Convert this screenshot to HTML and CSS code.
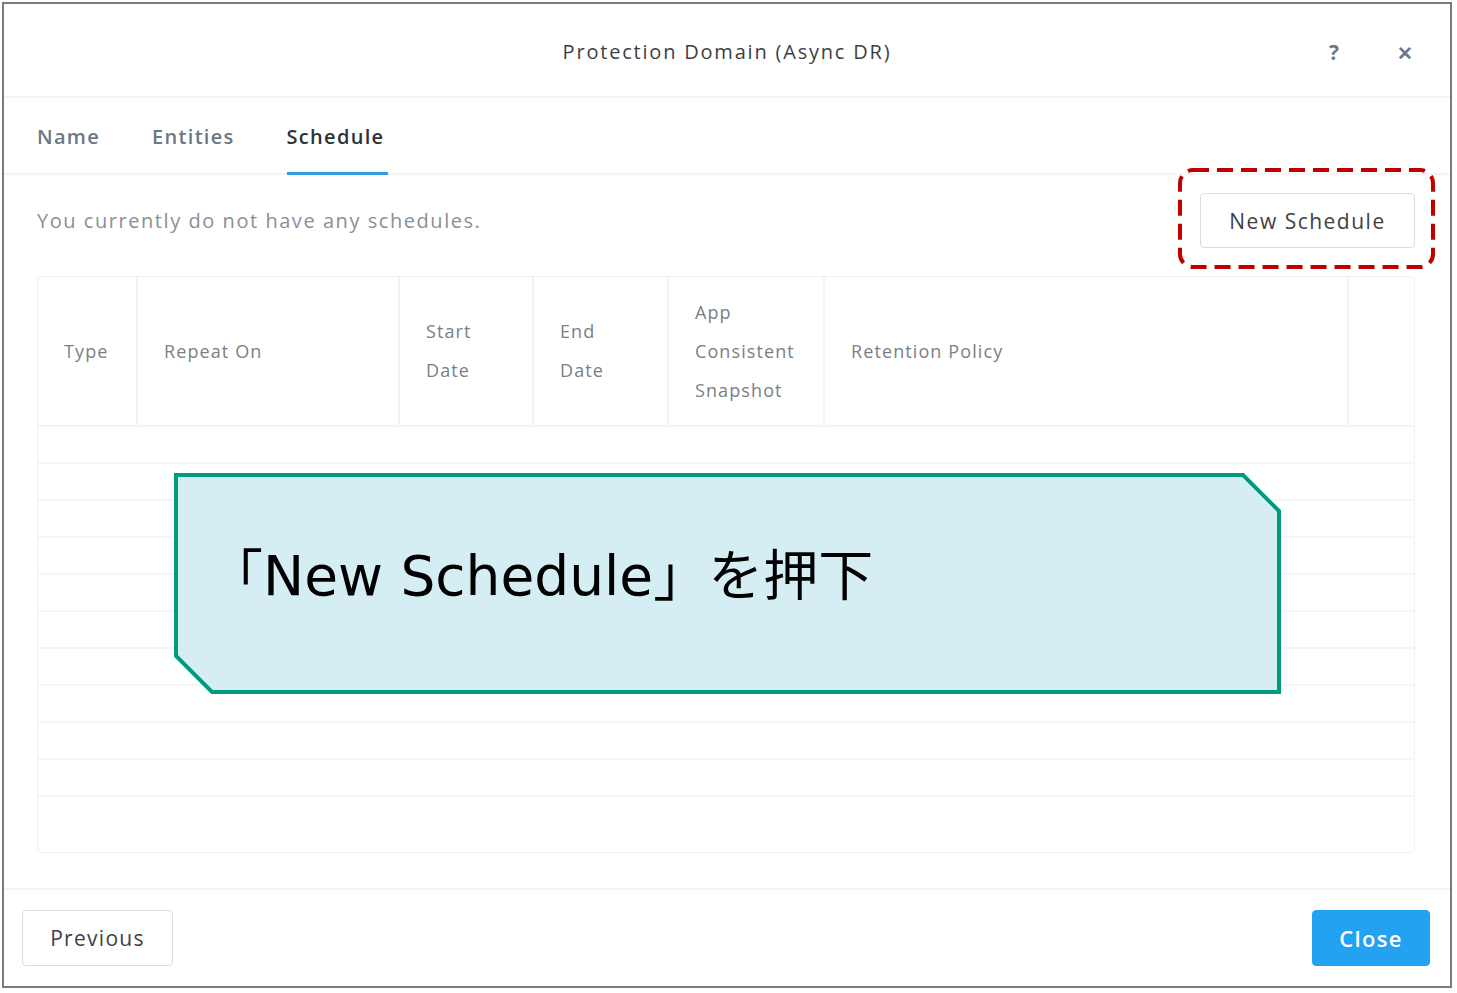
FILE: index.html
```html
<!DOCTYPE html>
<html lang="ja">
<head>
    <meta charset="UTF-8">
    <meta name="viewport" content="width=device-width, initial-scale=1.0">
    <title>Protection Domain (Async DR)</title>
    <link rel="stylesheet" href="styles.css">
</head>
<body>

    <div class="frame">
        <div class="header">
            <h2>Protection Domain (Async DR)</h2>
            <span class="help">?</span>
            <span class="close-x">&#x2715;</span>
        </div>

        <div class="tabs">
            <span class="tab">Name</span>
            <span class="tab">Entities</span>
            <span class="tab active">Schedule</span>
        </div>

        <div class="content">
            <div class="toolbar">
                <p class="empty-msg">You currently do not have any schedules.</p>
                <button class="btn new-btn">New Schedule</button>
            </div>

            <div class="table">
                <div class="thead">
                    <div class="th">Type</div>
                    <div class="th">Repeat On</div>
                    <div class="th">Start<br>Date</div>
                    <div class="th">End<br>Date</div>
                    <div class="th">App<br>Consistent<br>Snapshot</div>
                    <div class="th">Retention Policy</div>
                    <div class="th"></div>
                </div>
                <div class="tbody">
                    <div class="row"></div>
                    <div class="row"></div>
                    <div class="row"></div>
                    <div class="row"></div>
                    <div class="row"></div>
                    <div class="row"></div>
                    <div class="row"></div>
                    <div class="row"></div>
                    <div class="row"></div>
                    <div class="row"></div>
                </div>
            </div>
        </div>

        <div class="footer">
            <button class="btn prev-btn">Previous</button>
            <button class="btn primary">Close</button>
        </div>

        <!-- 注釈 -->
        <svg class="mark" width="257" height="101" viewBox="0 0 257 101">
            <rect x="2" y="2" width="253" height="97" rx="13" fill="none" stroke="#c00000" stroke-width="4" stroke-dasharray="16 8"/>
        </svg>
        <div class="callout">
            <svg width="1107" height="221" viewBox="0 0 1107 221">
                <polygon points="2,2 1069,2 1105,38 1105,219 38,219 2,183" fill="#d5eef4" stroke="#009b7b" stroke-width="4"/>
            </svg>
            <span class="callout-text">「New Schedule」を押下</span>
        </div>
    </div>

</body>
</html>
```

FILE: styles.css
```css
* {
    margin: 0;
    padding: 0;
    box-sizing: border-box;
}

body {
    background: white;
    font-family: "Open Sans", Arial, sans-serif;
}

.frame {
    position: relative;
    margin: 2px;
    width: 1450px;
    height: 986px;
    border: 2px solid #7a7a7a;
    background: white;
    display: flex;
    flex-direction: column;
}

.header {
    height: 94px;
    border-bottom: 2px solid #f2f3f4;
    display: flex;
    align-items: center;
    justify-content: center;
    position: relative;
}

.header h2 {
    font-size: 20px;
    font-weight: 400;
    letter-spacing: 1.8px;
    color: #3b3f44;
    margin-top: 2px;
}

.help, .close-x {
    position: absolute;
    top: 34px;
    color: #6b7a89;
    font-weight: 700;
}

.help {
    left: 1325px;
    font-size: 21px;
}

.close-x {
    left: 1393px;
    font-size: 19px;
    top: 36px;
}

.tabs {
    height: 77px;
    padding-left: 33px;
    display: flex;
    border-bottom: 2px solid #f3f4f5;
}

.tab {
    font-size: 20px;
    letter-spacing: 1.3px;
    color: #6c7784;
    font-weight: 600;
    padding-top: 25px;
    margin-right: 52px;
    border-bottom: 3px solid transparent;
    margin-bottom: -2px;
}

.tab.active {
    color: #2e3338;
    border-bottom-color: #2d9ee0;
    padding-right: 4px;
}

.content {
    flex: 1;
    padding: 18px 35px 0 33px;
}

.toolbar {
    display: flex;
    align-items: center;
    justify-content: space-between;
    height: 55px;
}

.empty-msg {
    font-size: 20px;
    letter-spacing: 1.55px;
    color: #8a8f95;
}

.btn {
    font-family: "Open Sans", Arial, sans-serif;
    background: white;
    border: 1px solid #d9dcdf;
    border-radius: 4px;
    color: #3d4146;
    cursor: pointer;
}

.new-btn {
    width: 215px;
    height: 55px;
    font-size: 21px;
    letter-spacing: 1.5px;
}

.table {
    margin-top: 28px;
    height: 577px;
    border: 1px solid #eff0f1;
    border-radius: 5px;
}

.thead {
    display: grid;
    grid-template-columns: 100px 262px 134px 135px 156px 524px 1fr;
    height: 150px;
    border-bottom: 2px solid #f2f3f4;
}

.th {
    border-right: 2px solid #f2f3f4;
    display: flex;
    align-items: center;
    padding-left: 26px;
    font-size: 18px;
    letter-spacing: 1.1px;
    line-height: 39px;
    color: #7a7f85;
}

.th:last-child {
    border-right: none;
}

.row {
    height: 37px;
    border-bottom: 2px solid #f4f5f6;
}

.footer {
    height: 98px;
    border-top: 2px solid #f2f3f4;
    display: flex;
    align-items: center;
    justify-content: space-between;
    padding: 0 20px 0 18px;
}

.prev-btn {
    width: 151px;
    height: 56px;
    font-size: 21px;
    letter-spacing: 1.3px;
}

.primary {
    width: 118px;
    height: 56px;
    font-size: 22px;
    letter-spacing: 1.3px;
    background: #22a2f0;
    border-color: #22a2f0;
    color: white;
    font-weight: 600;
}

.mark {
    position: absolute;
    left: 1174px;
    top: 164px;
}

.callout {
    position: absolute;
    left: 170px;
    top: 469px;
    width: 1107px;
    height: 221px;
}

.callout svg {
    display: block;
}

.callout-text {
    position: absolute;
    left: 34px;
    top: 58px;
    font-family: "DejaVu Sans", "Noto Sans CJK JP", sans-serif;
    font-size: 55px;
    color: #000;
    white-space: nowrap;
}
```
